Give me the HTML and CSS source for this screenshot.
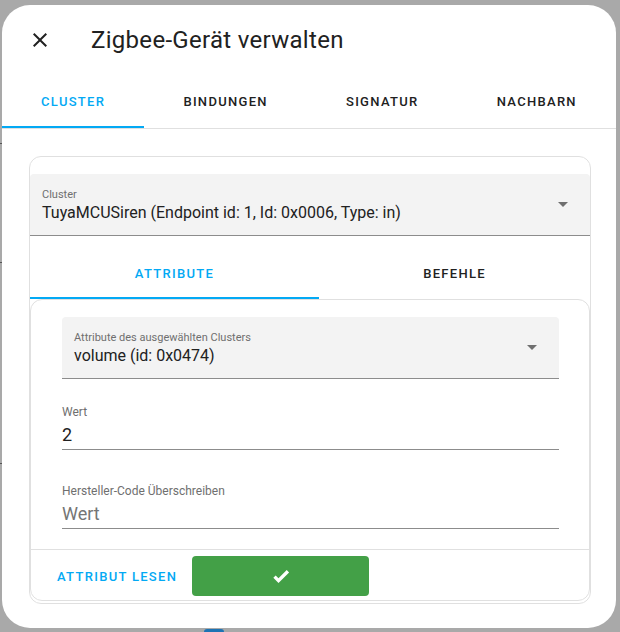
FILE: index.html
```html
<!DOCTYPE html>
<html lang="de">
<head>
<meta charset="utf-8">
<link rel="stylesheet" href="styles.css">
</head>
<body>
<div class="backdrop">
  <span class="bg-mark m1"></span>
  <span class="bg-mark m2"></span>
  <span class="bg-mark m3"></span>
  <span class="bg-blue"></span>
</div>
<div class="dialog">
  <div class="header">
    <svg class="close" viewBox="0 0 24 24" width="24" height="24"><path d="M19,6.41L17.59,5L12,10.59L6.41,5L5,6.41L10.59,12L5,17.59L6.41,19L12,13.41L17.59,19L19,17.59L13.41,12L19,6.41Z"/></svg>
    <h1 class="title">Zigbee-Gerät verwalten</h1>
  </div>
  <div class="tabs">
    <div class="tab active">Cluster</div>
    <div class="tab">Bindungen</div>
    <div class="tab">Signatur</div>
    <div class="tab">Nachbarn</div>
  </div>
  <div class="content">
    <div class="card">
      <div class="select wide">
        <div class="select-text">
          <div class="label">Cluster</div>
          <div class="value">TuyaMCUSiren (Endpoint id: 1, Id: 0x0006, Type: in)</div>
        </div>
        <span class="arrow"></span>
      </div>
      <div class="subtabs">
        <div class="subtab active">Attribute</div>
        <div class="subtab">Befehle</div>
      </div>
      <div class="inner-card">
        <div class="fields">
          <div class="select">
            <div class="select-text">
              <div class="label small">Attribute des ausgewählten Clusters</div>
              <div class="value">volume (id: 0x0474)</div>
            </div>
            <span class="arrow"></span>
          </div>
          <div class="field">
            <div class="field-label">Wert</div>
            <div class="field-value">2</div>
          </div>
          <div class="field">
            <div class="field-label">Hersteller-Code Überschreiben</div>
            <div class="field-value placeholder">Wert</div>
          </div>
        </div>
        <div class="actions">
          <div class="text-btn">Attribut lesen</div>
          <div class="ok-btn">
            <svg viewBox="0 0 24 24" width="20" height="20"><path d="M9,20.42L2.79,14.21L5.62,11.38L9,14.77L18.88,4.88L21.71,7.71L9,20.42Z"/></svg>
          </div>
        </div>
      </div>
    </div>
  </div>
</div>
</body>
</html>
```
FILE: styles.css
```css
* { box-sizing: border-box; }
html, body { margin: 0; padding: 0; }
body {
  background: #a9a9a9;
  font-family: Roboto, "Noto Sans", "Liberation Sans", sans-serif;
  color: #212121;
  width: 620px;
  height: 632px;
  overflow: hidden;
  position: relative;
}
.backdrop { position: absolute; inset: 0; }
.bg-mark { position: absolute; left: 0; width: 2px; height: 1px; background: #555; }
.m1 { top: 143px; }
.m2 { top: 262px; }
.m3 { top: 463px; }
.bg-blue { position: absolute; left: 204px; top: 629px; width: 20px; height: 3px; background: #1e73b4; border-radius: 3px 3px 0 0; }

.dialog {
  position: relative;
  margin: 5px 0 0 2px;
  width: 614px;
  height: 623px;
  background: #fff;
  border-radius: 28px;
  overflow: hidden;
}
.header {
  display: flex;
  align-items: center;
  height: 70px;
  padding: 0 0 0 26px;
}
.close { fill: #212121; width: 24px; height: 24px; }
.title {
  margin: 0 0 0 39px;
  font-size: 24px;
  font-weight: 400;
  color: #212121;
  letter-spacing: 0.3px;
}
.tabs {
  display: flex;
  height: 54px;
  border-bottom: 1px solid #e0e0e0;
}
.tab, .subtab {
  flex: 1 1 auto;
  display: flex;
  align-items: center;
  justify-content: center;
  font-size: 13px;
  font-weight: 500;
  text-transform: uppercase;
  letter-spacing: 1.3px;
  color: #212121;
  border-bottom: 2px solid transparent;
}
.tab { padding-top: 2px; }
.tab.active, .subtab.active { color: #03a9f4; border-bottom-color: #03a9f4; }

.content { padding: 27px 25px 0 27px; }
.card {
  border: 1px solid #e0e0e0;
  border-radius: 12px;
  padding-top: 17px;
  height: 448px;
  overflow: hidden;
}
.select {
  display: flex;
  align-items: center;
  height: 62px;
  background: #f3f3f3;
  border-radius: 4px 4px 0 0;
  border-bottom: 1px solid #8c8c8c;
  padding: 0 22px 0 12px;
}
.select-text { flex: 1; padding-top: 2px; }
.label { font-size: 11px; color: #6f6f6f; line-height: 14px; }
.value { font-size: 16px; color: #212121; line-height: 20px; margin-top: 1px; }
.arrow {
  width: 0; height: 0;
  border-left: 5px solid transparent;
  border-right: 5px solid transparent;
  border-top: 5px solid #6f6f6f;
}
.subtabs { display: flex; height: 63px; }
.subtab { padding-top: 13px; }
.subtab:first-child { flex: 0 0 289px; }
.subtab:last-child { flex: 1; }

.inner-card {
  border: 1px solid #e0e0e0;
  border-radius: 12px;
  height: 302px;
}
.fields { padding: 17px 30px 0 31px; }
.field {
  height: 56px;
  margin-top: 15px;
  border-bottom: 1px solid #8c8c8c;
  padding-top: 10px;
}
.field + .field { margin-top: 23px; }
.field-label { font-size: 12px; color: #6f6f6f; line-height: 16px; }
.field-value { font-size: 18px; line-height: 24px; margin-top: 3px; color: #212121; }
.field-value.placeholder { color: #757575; }
.actions {
  margin-top: 20px;
  border-top: 1px solid #e0e0e0;
  display: flex;
  align-items: center;
  padding: 6px 0 0 26px;
}
.text-btn {
  font-size: 13px;
  font-weight: 500;
  letter-spacing: 1.3px;
  text-transform: uppercase;
  color: #03a9f4;
  padding: 0 15px 0 0;
}
.ok-btn {
  width: 177px;
  height: 40px;
  background: #43a047;
  border-radius: 4px;
  display: flex;
  align-items: center;
  justify-content: center;
}
.ok-btn svg { fill: #fff; width: 20px; height: 20px; }
```
